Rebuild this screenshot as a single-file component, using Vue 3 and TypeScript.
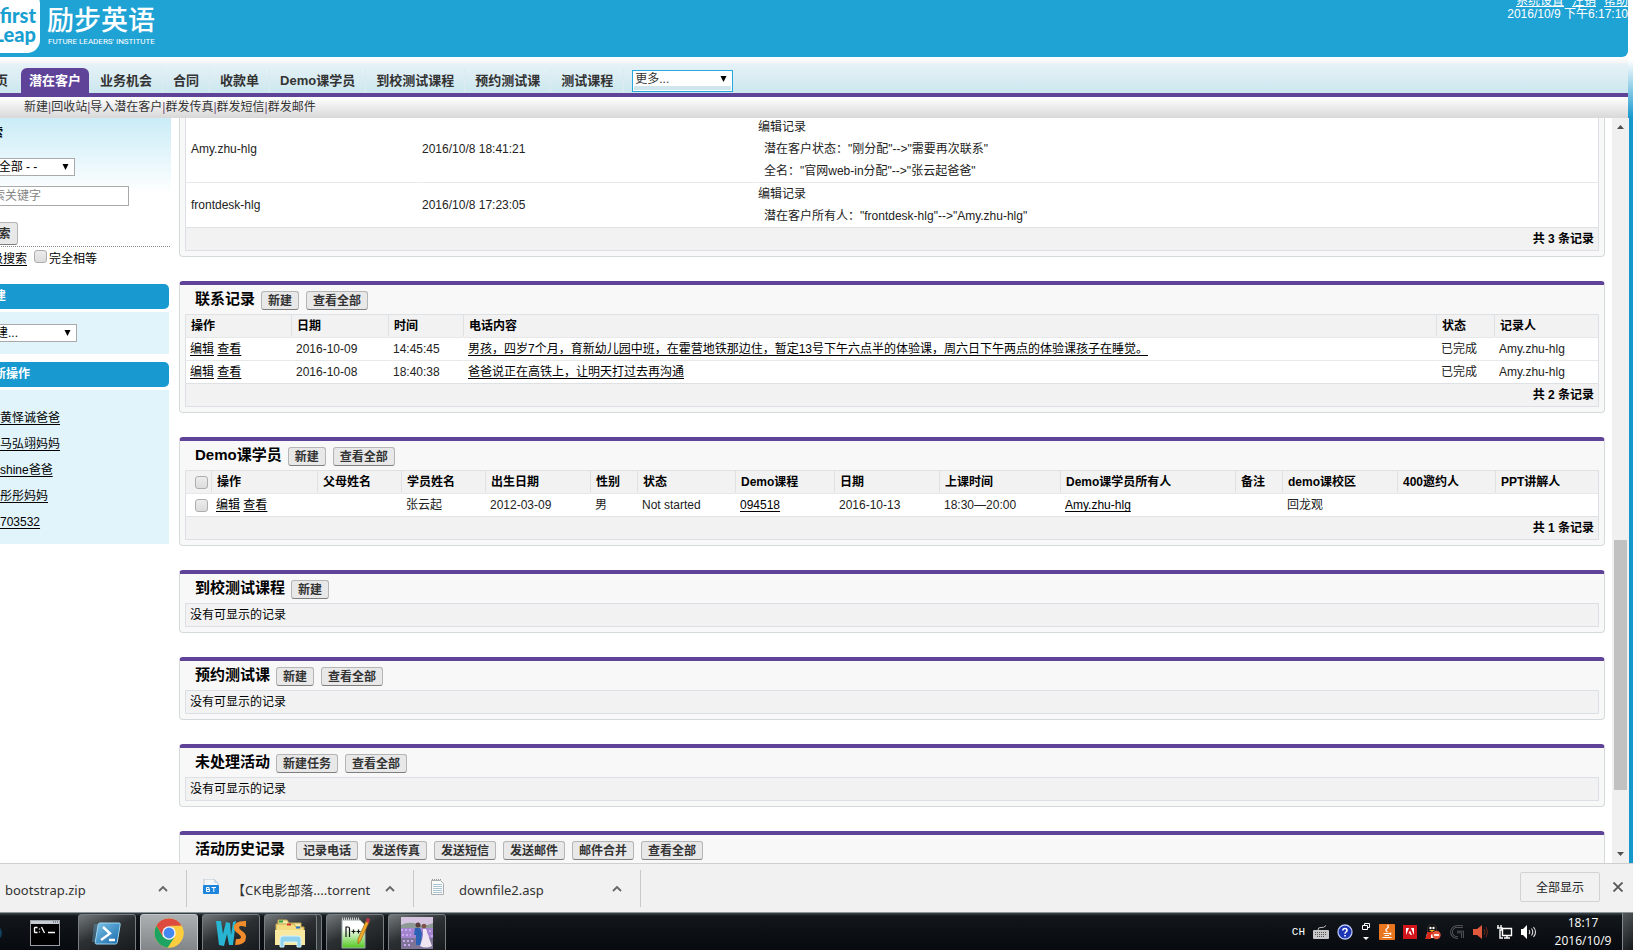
<script setup lang="ts">
import { ref } from 'vue'

interface Column {
  label: string
  width?: number
}
interface Cell {
  text?: string
  links?: string[]
}
interface Panel {
  title: string
  actions: string[]
  selectable?: boolean
  empty?: boolean
  columns?: Column[]
  rows?: Cell[][]
}
interface AuditRow {
  user: string
  time: string
  changes: string[]
}

const tabs = ['首页', '潜在客户', '业务机会', '合同', '收款单', 'Demo课学员', '到校测试课程', '预约测试课', '测试课程']
const activeTab = ref('潜在客户')
const submenu = ['新建', '回收站', '导入潜在客户', '群发传真', '群发短信', '群发邮件']
const recent = ['黄怿诚爸爸', '马弘翊妈妈', 'shine爸爸', '彤彤妈妈', '703532']

const audit: AuditRow[] = [
  {
    user: 'Amy.zhu-hlg',
    time: '2016/10/8 18:41:21',
    changes: ['潜在客户状态："刚分配"-->"需要再次联系"', '全名："官网web-in分配"-->"张云起爸爸"'],
  },
  {
    user: 'frontdesk-hlg',
    time: '2016/10/8 17:23:05',
    changes: ['潜在客户所有人："frontdesk-hlg"-->"Amy.zhu-hlg"'],
  },
]

const edit: Cell = { links: ['编辑', '查看'] }

const panels: Panel[] = [
  {
    title: '联系记录',
    actions: ['新建', '查看全部'],
    columns: [
      { label: '操作', width: 106 },
      { label: '日期', width: 97 },
      { label: '时间', width: 75 },
      { label: '电话内容' },
      { label: '状态', width: 58 },
      { label: '记录人', width: 104 },
    ],
    rows: [
      [
        edit,
        { text: '2016-10-09' },
        { text: '14:45:45' },
        { links: ['男孩，四岁7个月，育新幼儿园中班，在霍营地铁那边住，暂定13号下午六点半的体验课，周六日下午两点的体验课孩子在睡觉。'] },
        { text: '已完成' },
        { text: 'Amy.zhu-hlg' },
      ],
      [
        edit,
        { text: '2016-10-08' },
        { text: '18:40:38' },
        { links: ['爸爸说正在高铁上，让明天打过去再沟通'] },
        { text: '已完成' },
        { text: 'Amy.zhu-hlg' },
      ],
    ],
  },
  {
    title: 'Demo课学员',
    actions: ['新建', '查看全部'],
    selectable: true,
    columns: [
      { label: '操作', width: 106 },
      { label: '父母姓名', width: 84 },
      { label: '学员姓名', width: 84 },
      { label: '出生日期', width: 105 },
      { label: '性别', width: 47 },
      { label: '状态', width: 98 },
      { label: 'Demo课程', width: 99 },
      { label: '日期', width: 105 },
      { label: '上课时间', width: 121 },
      { label: 'Demo课学员所有人' },
      { label: '备注', width: 47 },
      { label: 'demo课校区', width: 115 },
      { label: '400邀约人', width: 98 },
      { label: 'PPT讲解人', width: 103 },
    ],
    rows: [
      [
        edit,
        {},
        { text: '张云起' },
        { text: '2012-03-09' },
        { text: '男' },
        { text: 'Not started' },
        { links: ['094518'] },
        { text: '2016-10-13' },
        { text: '18:30—20:00' },
        { links: ['Amy.zhu-hlg'] },
        {},
        { text: '回龙观' },
        {},
        {},
      ],
    ],
  },
  { title: '到校测试课程', actions: ['新建'], empty: true },
  { title: '预约测试课', actions: ['新建', '查看全部'], empty: true },
  { title: '未处理活动', actions: ['新建任务', '查看全部'], empty: true },
  { title: '活动历史记录', actions: ['记录电话', '发送传真', '发送短信', '发送邮件', '邮件合并', '查看全部'] },
]

const downloads = [
  { name: 'bootstrap.zip', kind: 'zip' },
  { name: '【CK电影部落....torrent', kind: 'torrent' },
  { name: 'downfile2.asp', kind: 'file' },
]
</script>

<template>
  <div class="screen">
    <div class="page">
      <div class="top">
        <header class="brand">
          <div class="mark"><span>first</span><span>Leap</span></div>
          <div class="wordmark">
            <strong>励步英语</strong>
            <small>FUTURE LEADERS' INSTITUTE</small>
          </div>
          <div class="account">
            <nav><a href="#">系统设置</a><a href="#">注销</a><a href="#">帮助</a></nav>
            <time>2016/10/9 下午6:17:10</time>
          </div>
        </header>
        <nav class="tabs">
          <a v-for="t in tabs" :key="t" href="#" :class="{ active: t === activeTab }" @click.prevent="activeTab = t">{{ t }}</a>
          <span class="pick more">
            <select aria-label="更多"><option>更多...</option></select>
            <svg viewBox="0 0 7 7"><path d="M0 0h7L3.500 7z" /></svg>
          </span>
        </nav>
        <nav class="submenu">
          <template v-for="(s, i) in submenu" :key="s"><i v-if="i">|</i><a href="#">{{ s }}</a></template>
        </nav>
      </div>

      <div class="workspace">
        <aside class="sidebar">
          <form class="search" @submit.prevent>
            <h2>搜索</h2>
            <span class="pick scope">
              <select aria-label="搜索范围"><option>- - 全部 - -</option></select>
              <svg viewBox="0 0 7 7"><path d="M0 0h7L3.500 7z" /></svg>
            </span>
            <input class="keyword" type="text" placeholder="搜索关键字" aria-label="搜索关键字" />
            <button class="btn submit" type="submit">搜索</button>
            <div class="advanced">
              <a href="#">高级搜索</a>
              <input id="exact" type="checkbox" class="check" />
              <label for="exact">完全相等</label>
            </div>
          </form>
          <h2 class="bar">新建</h2>
          <div class="box create">
            <span class="pick">
              <select aria-label="新建"><option>新建...</option></select>
              <svg viewBox="0 0 7 7"><path d="M0 0h7L3.500 7z" /></svg>
            </span>
          </div>
          <h2 class="bar">最新操作</h2>
          <ul class="box recent">
            <li v-for="r in recent" :key="r"><a href="#">{{ r }}</a></li>
          </ul>
        </aside>

        <main class="content">
          <section class="panel history">
            <table>
              <colgroup><col class="who" /><col class="when" /><col /></colgroup>
              <tbody>
                <tr v-for="a in audit" :key="a.time">
                  <td>{{ a.user }}</td>
                  <td>{{ a.time }}</td>
                  <td>
                    <div>编辑记录</div>
                    <div v-for="c in a.changes" :key="c" class="change">{{ c }}</div>
                  </td>
                </tr>
              </tbody>
              <tfoot>
                <tr><td colspan="3">共 3 条记录</td></tr>
              </tfoot>
            </table>
          </section>

          <section v-for="p in panels" :key="p.title" class="panel">
            <div class="caption">
              <h3>{{ p.title }}</h3>
              <div class="actions">
                <button v-for="a in p.actions" :key="a" type="button" class="btn">{{ a }}</button>
              </div>
            </div>
            <table v-if="p.columns && p.rows">
              <colgroup>
                <col v-if="p.selectable" class="tick" />
                <col v-for="c in p.columns" :key="c.label" :style="c.width ? { width: c.width + 'px' } : undefined" />
              </colgroup>
              <thead>
                <tr>
                  <th v-if="p.selectable" class="tickcell"><input type="checkbox" class="check" aria-label="全选" /></th>
                  <th v-for="c in p.columns" :key="c.label">{{ c.label }}</th>
                </tr>
              </thead>
              <tbody class="list">
                <tr v-for="(r, ri) in p.rows" :key="ri">
                  <td v-if="p.selectable" class="tickcell"><input type="checkbox" class="check" aria-label="选择" /></td>
                  <td v-for="(c, ci) in r" :key="ci">
                    <template v-if="c.links"><template v-for="(l, li) in c.links" :key="l">{{ li ? ' ' : '' }}<a href="#">{{ l }}</a></template></template>
                    <template v-else>{{ c.text }}</template>
                  </td>
                </tr>
              </tbody>
              <tfoot>
                <tr><td :colspan="p.columns.length + (p.selectable ? 1 : 0)">共 {{ p.rows.length }} 条记录</td></tr>
              </tfoot>
            </table>
            <p v-else-if="p.empty" class="empty">没有可显示的记录</p>
          </section>
        </main>

        <div class="scrollbar">
          <svg viewBox="0 0 7 4"><path d="M0 4L3.500 0L7 4z" /></svg>
          <div class="track"><div class="thumb"></div></div>
          <svg viewBox="0 0 7 4"><path d="M0 0L3.500 4L7 0z" /></svg>
        </div>
      </div>
    </div>

    <footer class="downloads">
      <div v-for="d in downloads" :key="d.name" class="download">
        <svg class="ficon" viewBox="0 0 16 16">
          <g v-if="d.kind === 'torrent'">
            <path d="M1 0h10l4 4v4H1z" fill="#f3f7fb" stroke="#b9c4d0" />
            <path d="M11 0v4h4" fill="#cfd9e4" />
            <rect y="6" width="16" height="9" rx="1" fill="#1d86dc" />
            <path d="M3.500 8.500h2.500v2H3.500zM3.500 10.500h3v2h-3zM8.500 8.500h4.500M10.800 8.500v4.500" fill="none" stroke="#fff" stroke-width="1" />
          </g>
          <g v-else-if="d.kind === 'file'">
            <path d="M1.500 1.500h9l3 3v11h-12z" fill="#fbfbfb" stroke="#a9adb0" />
            <path d="M2 .5h9" stroke="#999" stroke-dasharray="1 1" />
            <path d="M3 5.500h9M3 7.500h9M3 9.500h9M3 11.500h9M3 13.500h9" stroke="#a9c5d2" />
          </g>
        </svg>
        <span class="fname">{{ d.name }}</span>
        <button type="button" class="chev" :aria-label="d.name + ' 选项'">
          <svg viewBox="0 0 10 7"><path d="M1 6l4-4 4 4" fill="none" stroke="#666" stroke-width="1.800" /></svg>
        </button>
      </div>
      <button type="button" class="showall">全部显示</button>
      <button type="button" class="close" aria-label="关闭">
        <svg viewBox="0 0 10 10"><path d="M0.500 0.500l9 9M9.500 0.500l-9 9" stroke="#555" stroke-width="1.800" /></svg>
      </button>
    </footer>

    <div class="taskbar">
      <div class="orb"></div>
      <button type="button" class="task plain" aria-label="命令提示符">
        <svg width="30" height="26" viewBox="0 0 30 26">
          <rect x=".5" y=".5" width="29" height="25" fill="#000" stroke="#9a9da1" />
          <rect x="1" y="1" width="28" height="3" fill="#c6ccd4" />
          <path d="M23 2h1M25 2h1M27 2h1" stroke="#445" />
          <path d="M7.500 7.500H5L4.500 8v4l.5.500h2.500M9.500 8.500v1M9.500 11.500v1M11.500 7l3 6M18 12.500h7" fill="none" stroke="#fff" stroke-width="1.300" />
        </svg>
      </button>
      <button type="button" class="task" aria-label="PowerShell">
        <svg width="30" height="26" viewBox="0 0 30 26">
          <defs><linearGradient id="ps" x2="1" y2="1"><stop stop-color="#7cc4ea" /><stop offset="1" stop-color="#1667a8" /></linearGradient></defs>
          <path d="M2 4h6L5 22H0z" fill="#5aa4cc" opacity=".4" />
          <path d="M8 3h19q1.500 0 1.200 1.500l-3 18Q25 24 23.500 24h-19Q3 24 3.200 22.500l3-18Q6.500 3 8 3z" fill="url(#ps)" stroke="#9ed6f2" />
          <path d="M11 7l7 6.500L9 20M17 20h6" fill="none" stroke="#fff" stroke-width="2.400" />
        </svg>
      </button>
      <button type="button" class="task current" aria-label="Chrome">
        <svg width="30" height="30" viewBox="0 0 30 30">
          <circle cx="15" cy="15" r="14.500" fill="#fccd3f" />
          <path d="M2.400 7.800A14.500 14.500 0 0 1 27.600 7.800L15 8.500 8.800 18.600z" fill="#dd4b3e" />
          <path d="M2.400 7.800A14.500 14.500 0 0 0 14 29.500L21 18.500 15 21.500 8.800 18.600z" fill="#1da362" />
          <path d="M27.600 7.800H15a7 7 0 0 1 6.200 10.500L14 29.500A14.500 14.500 0 0 0 27.600 7.800z" fill="#fccd3f" />
          <circle cx="15" cy="15" r="6.800" fill="#f4f4f4" />
          <circle cx="15" cy="15" r="5.400" fill="#4688f1" />
        </svg>
      </button>
      <button type="button" class="task" aria-label="WebStorm">
        <svg width="32" height="28" viewBox="0 0 32 28">
          <path d="M1 2h5l2 13 3-12 4 1 1 12 2-13 3-1-3 24h-4l-2-11-3 12-5-1z" fill="#27b5d3" />
          <path d="M31 2v6l-4-1q-3-.5-3 1.500 0 1.500 3 3.500 4 2.500 4 6 0 8-11 8l1-6q5 .5 5-2 0-1.500-3-3.500-4-2.500-4-6 0-7 12-6.500z" fill="#f08c2c" />
        </svg>
      </button>
      <button type="button" class="task stacked" aria-label="资源管理器">
        <svg width="32" height="30" viewBox="0 0 32 30">
          <path d="M4 2h9l2 3h12v6H4z" fill="#f5e7a6" stroke="#c3a64d" />
          <path d="M2 6h18l2 3h8v17H2z" fill="#f4dc83" stroke="#c3a64d" />
          <path d="M5 3.500h4" stroke="#26a146" stroke-width="2" />
          <path d="M13 6.500h4" stroke="#d3372b" stroke-width="2" />
          <path d="M22 9.500h4" stroke="#2a78c8" stroke-width="2" />
          <path d="M1 12h30v15H1z" fill="#f8e8a0" />
          <path d="M6 29v-8q0-3 3-3h15q3 0 3 3v8h-4v-5H10v5z" fill="#8fd2ed" stroke="#d7f3fc" />
        </svg>
      </button>
      <button type="button" class="task" aria-label="Notepad++">
        <svg width="32" height="32" viewBox="0 0 32 32">
          <defs><linearGradient id="np" x2="0" y2="1"><stop offset=".3" stop-color="#fff" /><stop offset="1" stop-color="#52c81e" /></linearGradient></defs>
          <path d="M3 3h18l5 5v23H3z" fill="url(#np)" stroke="#9aa" />
          <path d="M3 2h18" stroke="#ccc" stroke-width="3" stroke-dasharray="1 1" />
          <path d="M7 20V10h2q1.500 0 1.500 1.500V20M12.500 14.500h4M14.500 12.500v4M17.500 14.500h4M19.500 12.500v4" fill="none" stroke="#111" stroke-width="1.200" />
          <path d="M27 4l3 1-8 18-3 4v-5z" fill="#f0a92b" stroke="#9b6512" stroke-width=".7" />
          <path d="M27.500 1l3.500 1-1 4-3-1z" fill="#c53845" />
        </svg>
      </button>
      <button type="button" class="task" aria-label="照片">
        <svg width="32" height="32" viewBox="0 0 32 32">
          <rect width="32" height="32" fill="#a384cf" />
          <rect width="32" height="10" fill="#d5c4e0" />
          <path d="M0 8q8-4 16-1t16-1v5H0z" fill="#8d9a95" />
          <rect y="21" width="32" height="11" fill="#7d7496" />
          <path d="M0 13h10M24 14h8M1 18h9M26 19h6M2 24h10M3 28h8" stroke="#c7aaf0" stroke-width="2" stroke-dasharray="2 2" />
          <circle cx="17" cy="8" r="2.500" fill="#5a3d40" />
          <path d="M14 11h5l2 5-1 12h-5V18h-2z" fill="#2c62b4" />
          <circle cx="23" cy="9" r="2.300" fill="#7d5148" />
          <path d="M22 12h3l2 6 4 11q-6 3-12 0l3-10z" fill="#f0e6f2" />
        </svg>
      </button>

      <div class="tray">
        <span class="lang">CH</span>
        <svg width="16" height="14" viewBox="0 0 16 14"><path d="M5 5q0-3 3-2.500T13 .5" fill="none" stroke="#bbb" /><rect y="5" width="16" height="9" rx="1" fill="#c7c7c7" /><path d="M2 7.500h12M2 9.500h12M4 11.500h8" stroke="#555" stroke-dasharray="1 1" /></svg>
        <svg width="16" height="16" viewBox="0 0 16 16"><circle cx="8" cy="8" r="7" fill="#1c35b5" stroke="#b9c5ee" stroke-width="1.300" /><path d="M5.800 6.500Q6 4.500 8 4.500t2 2q0 1-1.200 1.600Q8 8.500 8 9.700M8 11v1.500" fill="none" stroke="#fff" stroke-width="1.600" /></svg>
        <svg class="updown" width="8" height="18" viewBox="0 0 8 18"><path d="M2.500 3V.5h5v4H5M.5 2.500h5v4h-5z" fill="none" stroke="#fff" /><path d="M1 14h6l-3 3z" fill="#fff" /></svg>
        <svg width="16" height="16" viewBox="0 0 16 16"><rect width="16" height="16" rx="1" fill="#e8761f" /><path d="M8.500 1q2 2-.5 3.500T8.500 8M4.500 9.500h6q2.500-1 .5 1.500M5.500 11.500h4.500M3.500 13.500h9" fill="none" stroke="#fff" stroke-width="1.200" /></svg>
        <svg width="14" height="14" viewBox="0 0 14 14"><rect width="14" height="14" fill="#d3151c" /><path d="M3 3h3l-3 7zM8 3h3v7zM7 5.500L9 10H7.500L7 8.500H5.500z" fill="#fff" /></svg>
        <svg width="16" height="16" viewBox="0 0 16 16"><ellipse cx="7" cy="5.500" rx="4.500" ry="5.500" fill="#111" stroke="#555" stroke-width=".5" /><path d="M2 9h10l1 5H1z" fill="#fff" /><path d="M2 8h10v2.500H6V15H0q1-3 2-4z" fill="#d8291d" /><circle cx="5.500" cy="4" r="1.200" fill="#fff" /><circle cx="8.500" cy="4" r="1.200" fill="#fff" /><path d="M4 6h6l-3 2z" fill="#f3b31d" /><circle cx="11.500" cy="11" r="4.200" fill="#e4543a" /><path d="M9 11h5" stroke="#fff" stroke-width="1.800" /></svg>
        <svg width="16" height="16" viewBox="0 0 16 16"><path d="M14 2.500H8a5.500 5.500 0 0 0 0 11h1M8 8h5.500v6" fill="none" stroke="#62666a" stroke-width="2.600" /><path d="M14 2.500H8a5.500 5.500 0 0 0 0 11h1M8 8h5.500v6" fill="none" stroke="#17191b" stroke-width="1.200" /></svg>
        <svg width="16" height="14" viewBox="0 0 16 14"><path d="M0 4h4l5-4v14l-5-4H0z" fill="#e1593c" /><path d="M11 4q2 3 0 6M13 2q3 5 0 10" fill="none" stroke="#70281d" /></svg>
        <svg width="16" height="14" viewBox="0 0 16 14"><path d="M5.500 3.500h9v7h-9zM7 13h6M10 11v2M1 0v3M4 0v3M0 3h5v2H3v8h3" fill="none" stroke="#fff" stroke-width="1.400" /></svg>
        <svg width="16" height="14" viewBox="0 0 16 14"><path d="M0 4h2l4-4v14l-4-4H0z" fill="#fff" /><path d="M8 5q1.500 2 0 4M10.500 3.500q2.500 3.500 0 7M12.500 2q4 5 0 10" fill="none" stroke="#ddd" stroke-width="1.100" /></svg>
        <time class="clock"><span>18:17</span><span>2016/10/9</span></time>
        <button type="button" class="desktop" aria-label="显示桌面"></button>
      </div>
    </div>
  </div>
</template>

<style>
body {
  margin: 0;
  overflow: hidden;
}
</style>

<style scoped>
.screen {
  display: flex;
  flex-direction: column;
  height: 100vh;
  overflow: hidden;
  font: 12px/22px 'Liberation Sans', 'Noto Sans CJK SC', sans-serif;
  color: #222;
}
.screen *,
.screen *::before {
  box-sizing: border-box;
}
h2,
h3,
p,
ul {
  margin: 0;
  padding: 0;
}
h2 {
  font-size: 12px;
}
button,
input,
select {
  font: inherit;
  color: inherit;
  margin: 0;
}
svg {
  display: block;
  flex: none;
}
.page {
  flex: 1;
  min-height: 0;
  display: flex;
  flex-direction: column;
  background: linear-gradient(#fff 60px, #1798cd 118px);
}
.top {
  flex: none;
  margin-right: 5px;
  background: #fff;
}
.brand {
  display: flex;
  height: 57px;
  overflow: hidden;
  background: #1fa3d5;
  border-bottom-right-radius: 6px;
  color: #fff;
}
.mark {
  display: flex;
  flex-direction: column;
  align-items: flex-end;
  flex: none;
  width: 62px;
  height: 62px;
  margin: -9px 0 0 -22px;
  padding: 15px 4px 0 0;
  border-radius: 13px;
  background: #fff;
  color: #1a9fd1;
  font: 900 20px/19px Lato, sans-serif;
}
.wordmark {
  display: flex;
  flex-direction: column;
  margin-left: 7px;
  white-space: nowrap;
}
.wordmark strong {
  font: 500 27px/37px 'Noto Sans CJK SC', sans-serif;
}
.wordmark small {
  padding-left: 1px;
  font: 8px/10px Roboto, sans-serif;
}
.account {
  margin: -5px 0 0 auto;
  text-align: right;
  line-height: 13px;
}
.account nav {
  display: flex;
  justify-content: flex-end;
  gap: 8px;
}
.account a {
  color: inherit;
}
.tabs {
  display: flex;
  height: 40px;
  padding-top: 11px;
  border-bottom: 4px solid #5f4399;
  background: linear-gradient(#fff, #f3f4f6 6px, #e6f2f7 7px, #cce7ee);
  font-size: 13px;
  font-weight: bold;
  line-height: 25px;
  white-space: nowrap;
}
.tabs a {
  flex: none;
  padding: 0 10px;
  border-right: 1px solid #dcebf0;
  color: #333;
  text-decoration: none;
}
.tabs a:first-child {
  margin-left: -28px;
  border: 0;
}
.tabs a.active {
  margin: 0 1px 0 3px;
  padding: 0 8px;
  border: 0;
  border-radius: 6px 6px 0 0;
  background: #5f4399;
  color: #fff;
}
.pick {
  position: relative;
  display: block;
}
.pick select {
  display: block;
  width: 100%;
  height: 18px;
  padding: 0 4px;
  appearance: none;
  border: 1px solid #a9a9a9;
  border-radius: 0;
  background: #fff;
  color: #000;
  line-height: 16px;
}
.pick svg {
  position: absolute;
  top: 6px;
  right: 6px;
  width: 7px;
  height: 6px;
  pointer-events: none;
}
.more {
  width: 101px;
  margin: 2px 0 0 8px;
  font-weight: normal;
}
.more select {
  height: 22px;
  padding: 0 2px 4px;
  border: 1px solid #27a9e0;
  box-shadow: inset 0 0 0 1px #fff, inset 0 -5px #cfe6ec;
  color: #333;
  font-size: 12px;
}
.submenu {
  height: 21px;
  padding-left: 24px;
  background: linear-gradient(#fff, #d8d8d8);
  line-height: 21px;
  white-space: nowrap;
}
.submenu a {
  color: #333;
  text-decoration: none;
}
.submenu i {
  color: #705070;
  font-style: normal;
}
.workspace {
  flex: 1;
  min-height: 0;
  display: flex;
  margin-right: 4px;
  overflow: hidden;
  background: #fff;
}
.sidebar {
  flex: none;
  width: 201px;
  margin-left: -30px;
  color: #000;
  white-space: nowrap;
}
.sidebar a,
.panel a {
  color: #000;
  text-underline-offset: 2px;
}
.search {
  padding: 6px 0 0 9px;
  background: linear-gradient(#caecf7, #fff 76px);
}
.search h2 {
  line-height: 18px;
}
.scope {
  width: 96px;
  margin-top: 16px;
}
.keyword {
  display: block;
  width: 150px;
  height: 20px;
  margin-top: 10px;
  padding: 0 1px;
  border: 1px solid #a9a9a9;
  background: #fff;
}
.keyword::placeholder {
  color: #858585;
}
.btn {
  height: 19px;
  padding: 1px 6px 0;
  border: 1px solid #b5b5b5;
  border-bottom-color: #7f7f7f;
  border-radius: 3px;
  background: #e8e8e9;
  color: #333;
  font-weight: bold;
  line-height: 16px;
  white-space: nowrap;
}
.submit {
  display: block;
  width: 39px;
  height: 23px;
  margin-top: 16px;
}
.advanced {
  display: flex;
  align-items: flex-start;
  width: 191px;
  height: 38px;
  margin-top: 1px;
  border-top: 1px dotted #888;
}
.advanced .check {
  margin: 3px 2px 0 7px;
}
.advanced a,
.advanced label {
  line-height: 25px;
}
.check {
  appearance: none;
  display: block;
  flex: none;
  width: 13px;
  height: 13px;
  border: 1px solid #adadad;
  border-radius: 3px;
  background: linear-gradient(#ececec, #dcdcdc);
}
.bar {
  width: 199px;
  height: 25px;
  padding-left: 12px;
  border-radius: 0 5px 5px 0;
  background: #1899cf;
  color: #fff;
  line-height: 25px;
}
.box {
  width: 199px;
  margin: 3px 0 8px;
  background: #e1f4fb;
}
.create {
  height: 42px;
  padding: 12px 92px 0 9px;
}
.recent {
  padding: 15px 0 9px 30px;
  line-height: 26px;
  list-style: none;
}
.content {
  flex: 1;
  min-width: 0;
  padding: 0 7px 0 8px;
}
.panel {
  margin-bottom: 24px;
  padding: 0 5px 5px;
  border: 1px solid #d4dadc;
  border-top: 4px solid #5f4399;
  border-radius: 4px;
  background: #f8f8f8;
}
.history {
  margin-top: -3px;
  border-top: 0;
}
.caption {
  display: flex;
  height: 29px;
  padding-left: 10px;
}
.caption h3 {
  color: #000;
  font-size: 15px;
  line-height: 28px;
}
.actions {
  display: flex;
  gap: 7px;
  margin: 6px 0 0 6px;
}
.panel:last-child .actions {
  margin-left: 11px;
}
table {
  width: 100%;
  table-layout: fixed;
  border-collapse: separate;
  border-spacing: 0;
  border: solid #dcdfe3;
  border-width: 0 1px 1px 0;
  background: #fff;
}
th,
td {
  height: 23px;
  padding: 0 0 0 5px;
  border: solid #dfe2e5;
  border-width: 1px 0 0 1px;
  line-height: 22px;
  text-align: left;
  white-space: nowrap;
}
th {
  background: #f2f2f2;
  color: #000;
}
tbody td {
  border-left-color: transparent;
  border-top-color: #e6e8ea;
}
.list td {
  padding-left: 4px;
}
td:first-child {
  border-left-color: #dcdfe3;
}
tfoot td {
  padding-right: 4px;
  background: #f2f2f2;
  color: #000;
  font-weight: bold;
  text-align: right;
}
.who {
  width: 231px;
}
.when {
  width: 336px;
}
.change {
  padding-left: 6px;
}
.tick {
  width: 26px;
}
th.tickcell,
td.tickcell {
  padding-left: 9px;
}
.empty {
  height: 24px;
  padding-left: 4px;
  border: 1px solid #dcdfe3;
  background: #f2f2f2;
  color: #000;
}
.scrollbar {
  display: flex;
  flex-direction: column;
  align-items: center;
  flex: none;
  width: 17px;
  padding: 7px 0;
  background: #f0f0f0;
}
.scrollbar svg {
  width: 7px;
  height: 4px;
  fill: #505050;
}
.track {
  flex: 1;
  display: flex;
  flex-direction: column;
  width: 13px;
  padding: 6px 0;
}
.track::before {
  content: '';
  flex: 405;
}
.track::after {
  content: '';
  flex: 56;
}
.thumb {
  flex: 250;
  background: #c1c1c1;
}
.downloads {
  display: flex;
  flex: none;
  height: 49px;
  border-top: 1px solid #cfcfcf;
  background: #f1f1f1;
}
.download {
  display: flex;
  align-items: center;
  flex: none;
  width: 227px;
  height: 37px;
  margin-top: 6px;
  padding: 0 18px 0 16px;
  border-right: 1px solid #c8c8c8;
}
.download:first-child {
  margin-left: -40px;
}
.ficon {
  width: 16px;
  height: 16px;
  margin-bottom: 4px;
}
.fname {
  margin-left: 13px;
  color: #333;
  font: 13px/20px 'Noto Sans', 'Noto Sans CJK SC', sans-serif;
  padding-top: 2px;
  white-space: nowrap;
}
.chev {
  margin-left: auto;
  padding: 0;
  border: 0;
  background: none;
}
.chev svg {
  width: 10px;
  height: 7px;
}
.showall {
  flex: none;
  width: 80px;
  height: 30px;
  margin: 8px 13px 0 auto;
  padding: 2px 0 0;
  border: 1px solid #d2d2d2;
  border-radius: 2px;
  background: none;
  color: #222;
}
.close {
  width: 10px;
  height: 10px;
  margin: 18px 10px 0 0;
  padding: 0;
  border: 0;
  background: none;
}
.close svg {
  width: 10px;
  height: 10px;
}
.taskbar {
  display: flex;
  flex: none;
  height: 38px;
  border-top: 1px solid #8a9499;
  background: linear-gradient(#3b4549, #12171b 3px, #070a0e);
  overflow: hidden;
}
.orb {
  flex: none;
  width: 16px;
  height: 16px;
  margin: 12px 0 0 -14px;
  border-radius: 50%;
  background: #12405f;
}
.task {
  display: flex;
  align-items: center;
  justify-content: center;
  flex: none;
  width: 58px;
  height: 40px;
  margin: 1px 4px 0 0;
  padding: 0 0 3px;
  border: 1px solid #777d80;
  border-radius: 3px;
  background: linear-gradient(155deg, #73787b, #2c3033 45%, #15181b);
}
.plain {
  margin-left: 14px;
  border-color: transparent;
  background: none;
}
.current {
  background: linear-gradient(#adb0b2, #7f8284);
  border-color: #c2c5c7;
}
.stacked {
  box-shadow: inset -4px 0 #33383b, inset -5px 0 #777d80;
  padding-right: 6px;
}
.tray {
  display: flex;
  align-items: center;
  gap: 8px;
  margin-left: auto;
}
.lang {
  color: #fff;
  font: 11px/12px 'Liberation Mono', monospace;
}
.updown {
  margin: 0 1px;
}
.clock {
  display: flex;
  flex-direction: column;
  align-items: center;
  width: 62px;
  margin-left: 7px;
  color: #fff;
  font: 12px/18px 'Open Sans', sans-serif;
}
.desktop {
  width: 11px;
  height: 100%;
  padding: 0;
  border: 0;
  border-left: 1px solid #82888c;
  background: linear-gradient(135deg, #53585b, #14181b);
}
</style>
